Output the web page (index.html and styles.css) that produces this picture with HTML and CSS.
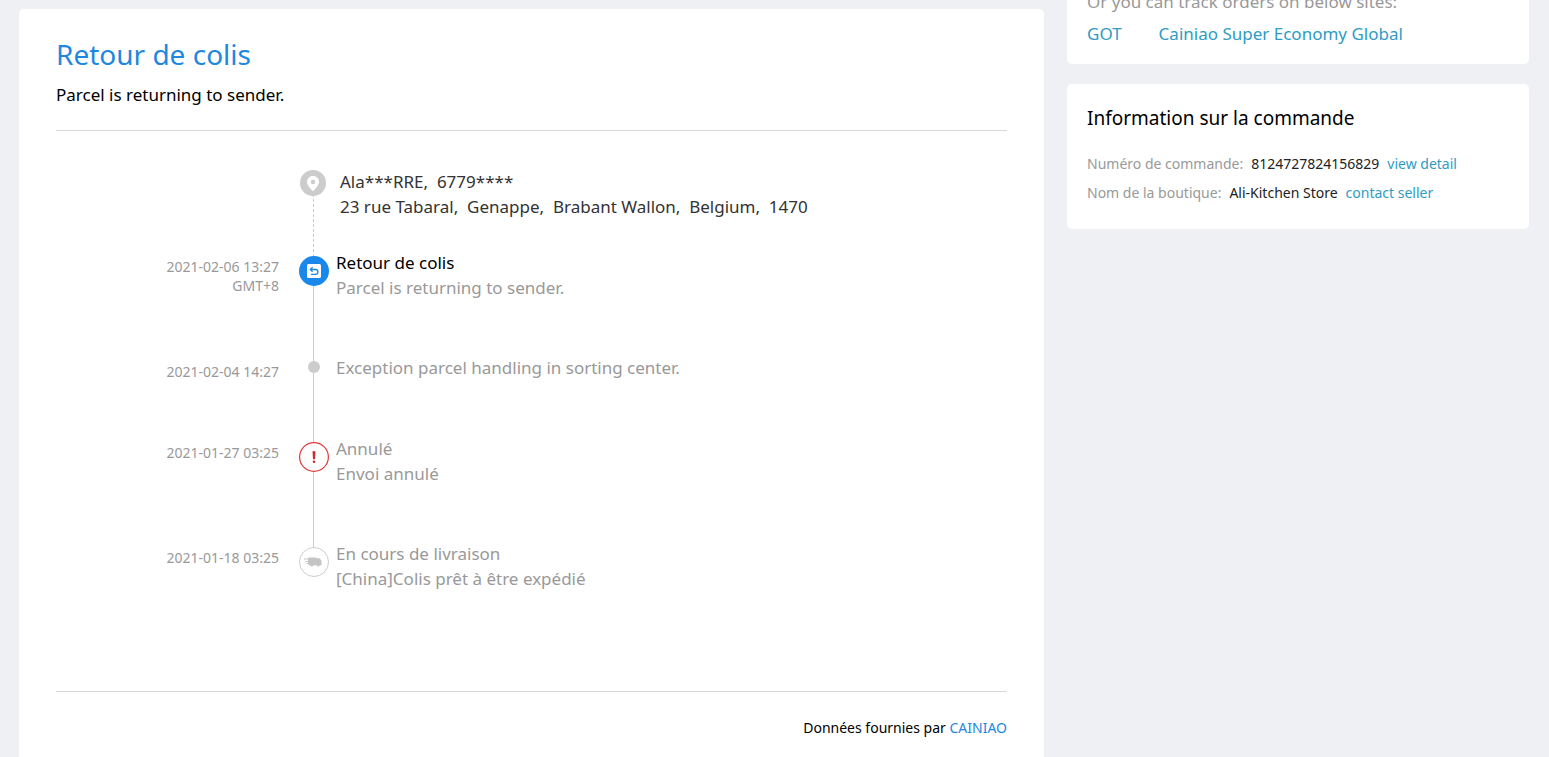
FILE: index.html
```html
<!DOCTYPE html>
<html lang="fr">
<head>
    <meta charset="UTF-8">
    <meta name="viewport" content="width=device-width, initial-scale=1.0">
    <title>Retour de colis</title>
    <link rel="stylesheet" href="styles.css">
</head>
<body>
    <div class="page">
        <main class="card tracking">
            <h1 class="status-title">Retour de colis</h1>
            <p class="status-text">Parcel is returning to sender.</p>

            <ul class="timeline">
                <li class="event event-address">
                    <div class="event-time"></div>
                    <div class="marker">
                        <svg class="icon" viewBox="0 0 26 26" aria-hidden="true">
                            <circle cx="13" cy="13" r="13" fill="#ccc"/>
                            <path d="M13 6c-3.500 0-6 2.500-6 5.700 0 3.600 3.200 6.300 6 9.600 2.800-3.300 6-6 6-9.600 0-3.200-2.500-5.700-6-5.700z" fill="#fff"/>
                            <circle cx="13" cy="12" r="2.200" fill="#ccc"/>
                        </svg>
                    </div>
                    <div class="event-text">
                        <div>Ala***RRE,&nbsp; 6779****</div>
                        <div>23 rue Tabaral,&nbsp; Genappe,&nbsp; Brabant Wallon,&nbsp; Belgium,&nbsp; 1470</div>
                    </div>
                </li>
                <li class="event">
                    <div class="event-time">2021-02-06 13:27<br>GMT+8</div>
                    <div class="marker">
                        <svg class="icon" viewBox="0 0 30 30" aria-hidden="true">
                            <circle cx="15" cy="15" r="15" fill="#1a87ea"/>
                            <rect x="8" y="8" width="14" height="14" rx="1.500" fill="#fff"/>
                            <path d="M11.500 13.500H16.500a2.300 2.300 0 0 1 0 4.800H12M13.600 11.200L11.300 13.500l2.300 2.300" fill="none" stroke="#1a87ea" stroke-width="1.300"/>
                        </svg>
                    </div>
                    <div class="event-text">
                        <div class="event-title">Retour de colis</div>
                        <div>Parcel is returning to sender.</div>
                    </div>
                </li>
                <li class="event">
                    <div class="event-time">2021-02-04 14:27</div>
                    <div class="marker"><span class="dot"></span></div>
                    <div class="event-text">
                        <div>Exception parcel handling in sorting center.</div>
                    </div>
                </li>
                <li class="event">
                    <div class="event-time">2021-01-27 03:25</div>
                    <div class="marker">
                        <svg class="icon" viewBox="0 0 30 30" aria-hidden="true">
                            <circle cx="15" cy="15" r="14.400" fill="#fff" stroke="#e0393a" stroke-width="1.200"/>
                            <path d="M13.500 9.200h3l-.5 8h-2z" fill="#c92c2e"/>
                            <circle cx="15" cy="19.800" r="1.300" fill="#c92c2e"/>
                        </svg>
                    </div>
                    <div class="event-text">
                        <div>Annulé</div>
                        <div>Envoi annulé</div>
                    </div>
                </li>
                <li class="event">
                    <div class="event-time">2021-01-18 03:25</div>
                    <div class="marker">
                        <svg class="icon" viewBox="0 0 30 30" aria-hidden="true">
                            <circle cx="15" cy="15" r="14.500" fill="#fff" stroke="#ccc"/>
                            <path d="M9.500 10.500H17.500v.8H20.500l2 2.400v4.500h-1.700a1.600 1.600 0 0 1-3.100 0H14.500a1.600 1.600 0 0 1-3.100 0H9.500v-1.200H7.500v-.9H9v-1.300H6v-.9H9v-1.500H5v-.9H9.500z" fill="#c4c4c4"/>
                        </svg>
                    </div>
                    <div class="event-text">
                        <div>En cours de livraison</div>
                        <div>[China]Colis prêt à être expédié</div>
                    </div>
                </li>
            </ul>

            <p class="provider">Données fournies par <a href="#">CAINIAO</a></p>
        </main>

        <aside class="sidebar">
            <section class="card sites">
                <p>Or you can track orders on below sites:</p>
                <div class="sites-links">
                    <a href="#">GOT</a>
                    <a href="#">Cainiao Super Economy Global</a>
                </div>
            </section>

            <section class="card order">
                <h2 class="order-title">Information sur la commande</h2>
                <div class="order-row">
                    <span>Numéro de commande:</span>
                    <span class="order-value">8124727824156829</span>
                    <a href="#">view detail</a>
                </div>
                <div class="order-row">
                    <span>Nom de la boutique:</span>
                    <span class="order-value">Ali-Kitchen Store</span>
                    <a href="#">contact seller</a>
                </div>
            </section>
        </aside>
    </div>
</body>
</html>
```
FILE: styles.css
```css
* {
    box-sizing: border-box;
}
body {
    margin: 0;
    background-color: #eef0f4;
    font-family: Tahoma, "Noto Sans", sans-serif;
    font-size: 17px;
    line-height: 25px;
    color: #999;
}
h1, h2, p, ul {
    margin: 0;
    padding: 0;
    font-weight: normal;
}
a {
    color: #2e9cc3;
    text-decoration: none;
}
.page {
    display: grid;
    grid-template-columns: minmax(0, 1025fr) minmax(0, 462fr);
    gap: 23px;
    min-height: 100vh;
    padding: 0 20px 0 19px;
}
.card {
    background-color: #fff;
    border-radius: 5px;
}

/* Tracking panel */
.tracking {
    margin-top: 9px;
    padding: 25px 37px 17px;
    border-radius: 5px 5px 0 0;
}
.status-title {
    font-size: 28px;
    line-height: 40px;
    color: #1e88e0;
}
.status-text {
    padding: 8px 0 23px;
    border-bottom: 1px solid #d8d8d8;
    color: #000;
}
.timeline {
    list-style: none;
    padding: 38px 0 45px;
    border-bottom: 1px solid #d8d8d8;
}
.event {
    display: grid;
    grid-template-columns: 223px 20px 30px 1fr;
    padding-bottom: 55px;
}
.event-time {
    padding-top: 7px;
    font-size: 14px;
    line-height: 19px;
    text-align: right;
}
.marker {
    grid-column: 3;
    position: relative;
    display: flex;
    justify-content: center;
    align-items: flex-start;
    padding-top: 6px;
}
.event-text {
    padding-left: 7px;
}
.event-title {
    color: #000;
}
/* line down to the next marker */
.event:not(:last-child) .marker::before {
    content: "";
    position: absolute;
    top: 20px;
    bottom: -75px;
    left: 14px;
    border-left: 1px solid #ccc;
}
.icon,
.dot {
    position: relative;
    z-index: 1;
    width: 30px;
    height: 30px;
}
.dot {
    width: 12px;
    height: 12px;
    border-radius: 50%;
    background-color: #ccc;
}
.event-address {
    padding-bottom: 31px;
    color: #333;
}
.event-address .marker {
    padding: 1px 2px 0 0;
}
.event-address .icon {
    width: 26px;
    height: 26px;
}
.event-address .event-text {
    padding-left: 11px;
}
.event-address:not(:last-child) .marker::before {
    bottom: -38px;
    border-left-style: dashed;
}
.provider {
    padding-top: 23px;
    font-size: 14px;
    text-align: right;
    color: #000;
}
.provider a {
    color: #1e88e0;
}

/* Sidebar */
.sidebar {
    display: flex;
    flex-direction: column;
    gap: 20px;
}
.sites {
    margin-top: -31px;
    padding: 20px 20px 18px;
}
.sites-links {
    display: flex;
    gap: 37px;
    padding-top: 7px;
}
.order {
    padding: 19px 20px 22px;
}
.order-title {
    padding-bottom: 16px;
    font-size: 19px;
    line-height: 30px;
    color: #000;
}
.order-row {
    display: flex;
    gap: 8px;
    font-size: 14px;
    line-height: 29px;
}
.order-value {
    color: #222;
}
```
